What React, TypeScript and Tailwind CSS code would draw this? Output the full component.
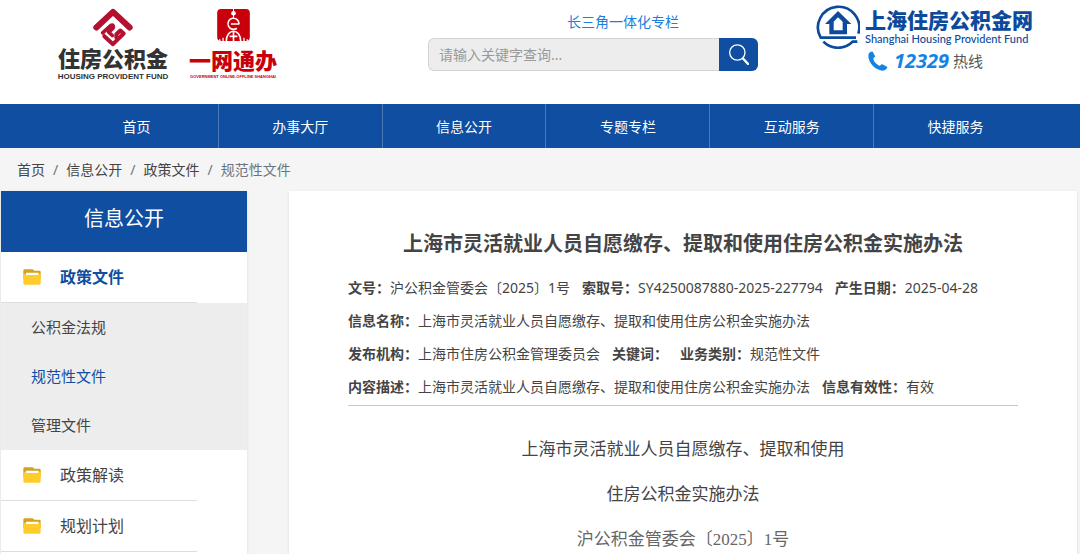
import { Fragment } from 'react';

const navItems = ['首页', '办事大厅', '信息公开', '专题专栏', '互动服务', '快捷服务'];

const crumbs = ['首页', '信息公开', '政策文件'];

const menu = [
  { title: '政策文件', active: true, children: ['公积金法规', '规范性文件', '管理文件'] },
  { title: '政策解读', active: false, children: [] },
  { title: '规划计划', active: false, children: [] },
];

const metaRows = [
  [
    { label: '文号', value: '沪公积金管委会〔2025〕1号' },
    { label: '索取号', value: 'SY4250087880-2025-227794' },
    { label: '产生日期', value: '2025-04-28' },
  ],
  [{ label: '信息名称', value: '上海市灵活就业人员自愿缴存、提取和使用住房公积金实施办法' }],
  [
    { label: '发布机构', value: '上海市住房公积金管理委员会' },
    { label: '关键词', value: '' },
    { label: '业务类别', value: '规范性文件' },
  ],
  [
    { label: '内容描述', value: '上海市灵活就业人员自愿缴存、提取和使用住房公积金实施办法' },
    { label: '信息有效性', value: '有效' },
  ],
];

const FundIcon = () => (
  <svg viewBox="0 0 120 116" className="w-10 h-[39px]" fill="none" stroke="#b4102f" strokeLinecap="round" strokeLinejoin="round">
    <path d="M10 58 L60 11 L110 58" strokeWidth="18" />
    <path d="M29 74 L53 52 C60 47 64 56 58 62 L47 72 L58 82" strokeWidth="11" />
    <path d="M34 84 L60 108 L92 76 L82 67 L70 78 V88" strokeWidth="12" />
  </svg>
);

const OneNetIcon = () => (
  <svg viewBox="0 0 100 98" className="w-[33px] h-8">
    <rect width="100" height="98" rx="12" fill="#c8000b" />
    <g fill="none" stroke="#fff" strokeWidth="5">
      <path d="M50 0 V28" strokeWidth="3" />
      <path d="M67 46 A17 17 0 1 0 60 59 M42 46 H68" />
      <path d="M28 98 C28 58 72 58 72 98 M50 68 V98 M38 84 H62" />
      <path d="M18 98 V88 M82 98 V88 M8 98 V93 M92 98 V93" strokeWidth="4" />
    </g>
    <circle cx="50" cy="13" r="7" fill="#fff" />
  </svg>
);

const HouseIcon = () => (
  <svg viewBox="0 0 132 132" className="w-11 h-11 shrink-0">
    <g fill="none" stroke="#0b4a9c" strokeWidth="8">
      <path d="M127 86 A62 62 0 1 0 14 98 H120" />
      <path d="M22 110 A62 62 0 0 0 110 110 H124" />
    </g>
    <path
      d="M66 18 L106 57 H93 V88 H40 V57 H27 Z M66 37 L53 50 V76 H80 V50 Z"
      fill="#0b4a9c"
      fillRule="evenodd"
    />
  </svg>
);

const PhoneIcon = () => (
  <svg viewBox="0 0 60 60" className="w-5 h-5" fill="#1384e6">
    <path d="M2 8 C6 2 12 0 14 2 L21 15 C22 19 15 20 16 24 C18 33 26 41 34 44 C38 45 39 38 43 40 L57 47 C60 50 54 58 46 59 C22 60 -4 32 2 8 Z" />
  </svg>
);

const SearchIcon = () => (
  <svg viewBox="0 0 60 62" className="w-5 h-[21px]" fill="none" stroke="#fff">
    <circle cx="25" cy="25" r="23" strokeWidth="4" />
    <path d="M42 43 L57 59" strokeWidth="7" strokeLinecap="round" />
  </svg>
);

const FolderIcon = () => (
  <svg viewBox="0 0 54 48" className="w-[18px] h-4">
    <path d="M1 5 Q1 1 5 1 H29 L34 5 H49 Q53 5 53 9 V30 H1 Z" fill="#d3a21c" />
    <rect x="9" y="11" width="38" height="7" rx="1" fill="#fff" />
    <path d="M1 14 H8 V18 H46 V14 H53 V43 Q53 47 49 47 H5 Q1 47 1 43 Z" fill="#ffcc2c" />
  </svg>
);

const Header = () => (
  <header className="flex items-start h-[104px] pl-[57px] pr-[45px] bg-white">
    <a href="#" className="flex flex-col items-center w-28 pt-2 whitespace-nowrap text-[#333]">
      <FundIcon />
      <span className="text-[22px] leading-[22px] font-black">住房公积金</span>
      <span className="mt-1 font-['Liberation_Sans'] text-[8px] leading-2 font-bold">HOUSING PROVIDENT FUND</span>
    </a>
    <a href="#" className="flex flex-col items-center w-22 ml-5 pt-[9px] whitespace-nowrap text-[#c8000b]">
      <OneNetIcon />
      <span className="mt-2 text-[22px] leading-[22px] font-black">一网通办</span>
      <span className="mt-1 font-['Liberation_Sans'] text-[4px] leading-1 font-bold">GOVERNMENT ONLINE-OFFLINE SHANGHAI</span>
    </a>
    <div className="flex-1 ml-[151px] mr-[58px] pt-3">
      <div className="pl-[60px] text-center text-sm leading-5">
        <a href="#" className="text-[#1b7fe0]">长三角一体化专栏</a>
      </div>
      <form className="flex h-[33px] mt-[6px]">
        <input
          type="text"
          aria-label="请输入关键字查询"
          placeholder="请输入关键字查询..."
          className="flex-1 min-w-0 px-[10px] text-sm bg-[#ededed] border border-r-0 border-[#d4d4d4] rounded-l-md placeholder:text-[#999]"
        />
        <button type="button" aria-label="搜索" className="flex items-center justify-center w-[39px] bg-[#0f4ea0] rounded-r-md">
          <SearchIcon />
        </button>
      </form>
    </div>
    <div className="pt-[5px] whitespace-nowrap">
      <a href="#" className="flex gap-[5px] text-[#0b4a9c]">
        <HouseIcon />
        <span className="flex flex-col w-[170px] pt-1">
          <span className="text-[21px] leading-[22px] font-black">上海住房公积金网</span>
          <span className="mt-[2px] font-[Lato] text-[11px] leading-3 font-medium">Shanghai Housing Provident Fund</span>
        </span>
      </a>
      <div className="flex items-center h-6 ml-[52px]">
        <PhoneIcon />
        <span className="ml-[6px] font-['Open_Sans'] text-xl leading-6 font-bold italic text-[#1384e6]">12329</span>
        <span className="ml-1 text-[15px] leading-6 text-[#555]">热线</span>
      </div>
    </div>
  </header>
);

const Sidebar = () => (
  <aside className="w-[246px] shrink-0 bg-white shadow-sm">
    <h2 className="h-[61px] text-center text-xl leading-[56px] text-white bg-[#0f4ea0]">信息公开</h2>
    <ul>
      {menu.map((item) => (
        <li key={item.title}>
          <a
            href="#"
            className={`flex items-center h-[51px] w-[196px] pl-[22px] gap-[19px] border-b border-[#ddd] text-base ${
              item.active ? 'font-bold text-[#0f4ea0]' : 'text-[#444]'
            }`}
          >
            <FolderIcon />
            {item.title}
          </a>
          {item.children.length > 0 && (
            <ul className="bg-[#ededed]">
              {item.children.map((child) => (
                <li key={child}>
                  <a
                    href="#"
                    className={`block pl-[30px] text-[15px] leading-[49px] ${
                      child === '规范性文件' ? 'text-[#0f4ea0]' : 'text-[#444]'
                    }`}
                  >
                    {child}
                  </a>
                </li>
              ))}
            </ul>
          )}
        </li>
      ))}
    </ul>
  </aside>
);

const Article = () => (
  <main className="flex-1 ml-[42px] px-[59px] pt-[38px] bg-white shadow-sm text-[#444]">
    <h1 className="text-center text-xl leading-[30px] font-bold whitespace-nowrap">
      上海市灵活就业人员自愿缴存、提取和使用住房公积金实施办法
    </h1>
    <dl className="mt-3 pb-[2px] border-b border-[#c8c8c8] text-sm leading-[33px] whitespace-nowrap">
      {metaRows.map((row, index) => (
        <div key={index} className="flex gap-3">
          {row.map((field) => (
            <div key={field.label} className="flex">
              <dt className="font-bold">{field.label}：</dt>
              <dd>{field.value}</dd>
            </div>
          ))}
        </div>
      ))}
    </dl>
    <div className="mt-[21px] text-center font-['Liberation_Serif','Noto_Sans_CJK_SC',serif] text-[17px] leading-[45px]">
      <p>上海市灵活就业人员自愿缴存、提取和使用</p>
      <p>住房公积金实施办法</p>
      <p className="text-[#666]">沪公积金管委会〔2025〕1号</p>
    </div>
  </main>
);

export default function App() {
  return (
    <div lang="zh-CN" className="flex flex-col min-h-screen bg-[#f5f5f5] font-['Noto_Sans','Noto_Sans_CJK_SC',sans-serif]">
      <Header />
      <nav className="flex h-11 pl-[55px] pr-[43px] bg-[#0f4ea0]">
        {navItems.map((item) => (
          <a
            key={item}
            href="#"
            className="flex-1 border-r border-[#4a78b4] last:border-r-0 text-center text-sm leading-[46px] text-white"
          >
            {item}
          </a>
        ))}
      </nav>
      <div className="flex gap-2 h-[43px] pl-[17px] text-sm leading-[44px] text-[#444]">
        {crumbs.map((crumb) => (
          <Fragment key={crumb}>
            <a href="#">{crumb}</a>
            <span className="text-[#6c757d]">/</span>
          </Fragment>
        ))}
        <span className="text-[#6c757d]">规范性文件</span>
      </div>
      <div className="flex flex-1 pl-px pr-[3px]">
        <Sidebar />
        <Article />
      </div>
    </div>
  );
}
